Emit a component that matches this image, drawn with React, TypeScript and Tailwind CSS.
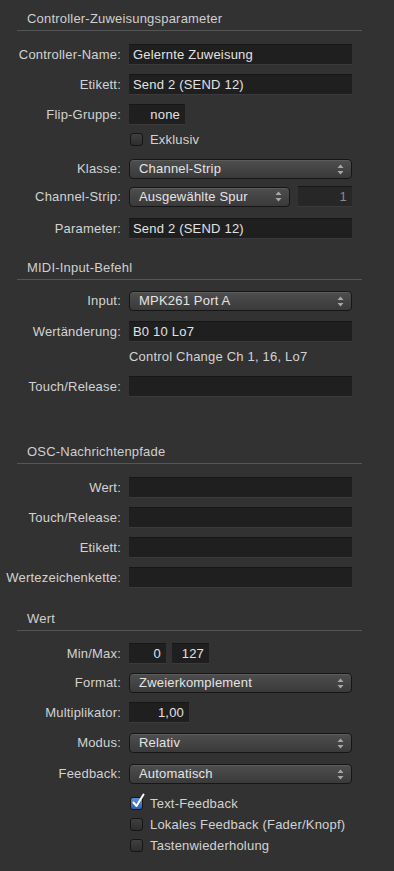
import React from 'react';

const SectionHeader: React.FC<{ title: string; pt: string }> = ({ title, pt }) => (
    <div className={`ml-[17px] w-[345px] border-b border-[#555555] pl-[10px] pb-[3px] leading-4 text-[#cfcfcf] ${pt}`}>
        {title}
    </div>
);

const Row: React.FC<{ label?: string; mt: string; h: string; children: React.ReactNode; end?: boolean }> = ({ label, mt, h, children, end }) => (
    <div className={`flex ${end ? 'items-end' : 'items-center'} ${mt} ${h}`}>
        <div className="w-[122px] shrink-0 text-right pr-px leading-4 text-[#d2d2d2] whitespace-nowrap">{label ? `${label}:` : ''}</div>
        <div className="ml-[7px] flex items-center gap-[6px] h-full">{children}</div>
    </div>
);

const Field: React.FC<{ value?: string; w: string; right?: boolean; dim?: boolean }> = ({ value = '', w, right, dim }) => (
    <div
        className={`h-[21px] ${w} flex items-center ${right ? 'justify-end pr-[5px]' : 'pl-[4px]'} ${dim ? 'bg-[#272727] text-[#8a8a8a]' : 'bg-[#1f1f1f] text-[#e2e2e2]'} border-t border-[#171717] border-b border-b-[#3a3a3a] leading-4 whitespace-nowrap`}
    >
        {value}
    </div>
);

const Arrows = () => (
    <svg width="7" height="11" viewBox="0 0 7 11" className="shrink-0">
        <path d="M3.5 0.5 L6.5 4 L0.5 4 Z" fill="#a8a8a8" />
        <path d="M3.5 10.5 L6.5 7 L0.5 7 Z" fill="#a8a8a8" />
    </svg>
);

const Select: React.FC<{ value: string; w: string }> = ({ value, w }) => (
    <div className={`h-[20px] ${w} flex items-center justify-between pl-[9px] pr-[7px] rounded-[4px] border border-[#161616] bg-gradient-to-b from-[#4e4e4e] to-[#3a3a3a] shadow-[inset_0_1px_0_#5c5c5c] text-[#e4e4e4] leading-4 whitespace-nowrap`}>
        <span>{value}</span>
        <Arrows />
    </div>
);

const Check: React.FC<{ label: string; checked?: boolean; mt: string }> = ({ label, checked, mt }) => (
    <div className={`flex items-center ml-[130px] ${mt} h-[13px]`}>
        <div className="relative w-[13px] h-[13px] shrink-0">
            <div className={`w-[13px] h-[13px] rounded-[3px] border border-[#151515] ${checked ? 'bg-gradient-to-b from-[#5d8fd8] to-[#2c5fb0]' : 'bg-gradient-to-b from-[#404040] to-[#2e2e2e]'}`} />
            {checked && (
                <svg width="14" height="16" viewBox="0 0 14 16" className="absolute left-[1px] -top-[4px]">
                    <path d="M2.5 9.5 L5.5 13 L12.5 1.5" stroke="#ffffff" strokeWidth="2" fill="none" strokeLinecap="round" strokeLinejoin="round" />
                </svg>
            )}
        </div>
        <span className="ml-[7px] leading-4 text-[#d2d2d2] whitespace-nowrap">{label}</span>
    </div>
);

export default function App() {
    return (
        <div className="w-[394px] h-[871px] bg-[#323232] text-[13px] tracking-[0.2px] font-['Liberation_Sans',Arial,sans-serif] overflow-hidden">
            <SectionHeader title="Controller-Zuweisungsparameter" pt="pt-[11px]" />
            <Row label="Controller-Name" mt="mt-[13px]" h="h-[21px]">
                <Field value="Gelernte Zuweisung" w="w-[223px]" />
            </Row>
            <Row label="Etikett" mt="mt-[9px]" h="h-[21px]">
                <Field value="Send 2 (SEND 12)" w="w-[223px]" />
            </Row>
            <Row label="Flip-Gruppe" mt="mt-[9px]" h="h-[21px]">
                <Field value="none" w="w-[56px]" right />
            </Row>
            <Check label="Exklusiv" mt="mt-[8px]" />
            <Row label="Klasse" mt="mt-[13px]" h="h-[20px]">
                <Select value="Channel-Strip" w="w-[223px]" />
            </Row>
            <Row label="Channel-Strip" mt="mt-[7px]" h="h-[21px]">
                <Select value="Ausgewählte Spur" w="w-[161px]" />
                <div className="ml-[2px]">
                    <Field value="1" w="w-[54px]" right dim />
                </div>
            </Row>
            <Row label="Parameter" mt="mt-[11px]" h="h-[21px]">
                <Field value="Send 2 (SEND 12)" w="w-[223px]" />
            </Row>

            <SectionHeader title="MIDI-Input-Befehl" pt="pt-[21px]" />
            <Row label="Input" mt="mt-[11px]" h="h-[20px]">
                <Select value="MPK261 Port A" w="w-[223px]" />
            </Row>
            <Row label="Wertänderung" mt="mt-[10px]" h="h-[21px]">
                <Field value="B0 10 Lo7" w="w-[223px]" />
            </Row>
            <div className="ml-[129px] mt-[7px] h-4 leading-4 text-[#d2d2d2]">Control Change Ch 1, 16, Lo7</div>
            <Row label="Touch/Release" mt="mt-[11px]" h="h-[21px]">
                <Field w="w-[223px]" />
            </Row>

            <SectionHeader title="OSC-Nachrichtenpfade" pt="pt-[47px]" />
            <Row label="Wert" mt="mt-[13px]" h="h-[21px]">
                <Field w="w-[223px]" />
            </Row>
            <Row label="Touch/Release" mt="mt-[9px]" h="h-[21px]">
                <Field w="w-[223px]" />
            </Row>
            <Row label="Etikett" mt="mt-[9px]" h="h-[21px]">
                <Field w="w-[223px]" />
            </Row>
            <Row label="Wertezeichenkette" mt="mt-[9px]" h="h-[21px]">
                <Field w="w-[223px]" />
            </Row>

            <SectionHeader title="Wert" pt="pt-[23px]" />
            <Row label="Min/Max" mt="mt-[12px]" h="h-[21px]">
                <Field value="0" w="w-[37px]" right />
                <Field value="127" w="w-[37px]" right />
            </Row>
            <Row label="Format" mt="mt-[9px]" h="h-[20px]">
                <Select value="Zweierkomplement" w="w-[223px]" />
            </Row>
            <Row label="Multiplikator" mt="mt-[9px]" h="h-[21px]">
                <Field value="1,00" w="w-[60px]" right />
            </Row>
            <Row label="Modus" mt="mt-[10px]" h="h-[20px]">
                <Select value="Relativ" w="w-[223px]" />
            </Row>
            <Row label="Feedback" mt="mt-[11px]" h="h-[20px]">
                <Select value="Automatisch" w="w-[223px]" />
            </Row>
            <Check label="Text-Feedback" checked mt="mt-[13px]" />
            <Check label="Lokales Feedback (Fader/Knopf)" mt="mt-[8px]" />
            <Check label="Tastenwiederholung" mt="mt-[8px]" />
        </div>
    );
}
